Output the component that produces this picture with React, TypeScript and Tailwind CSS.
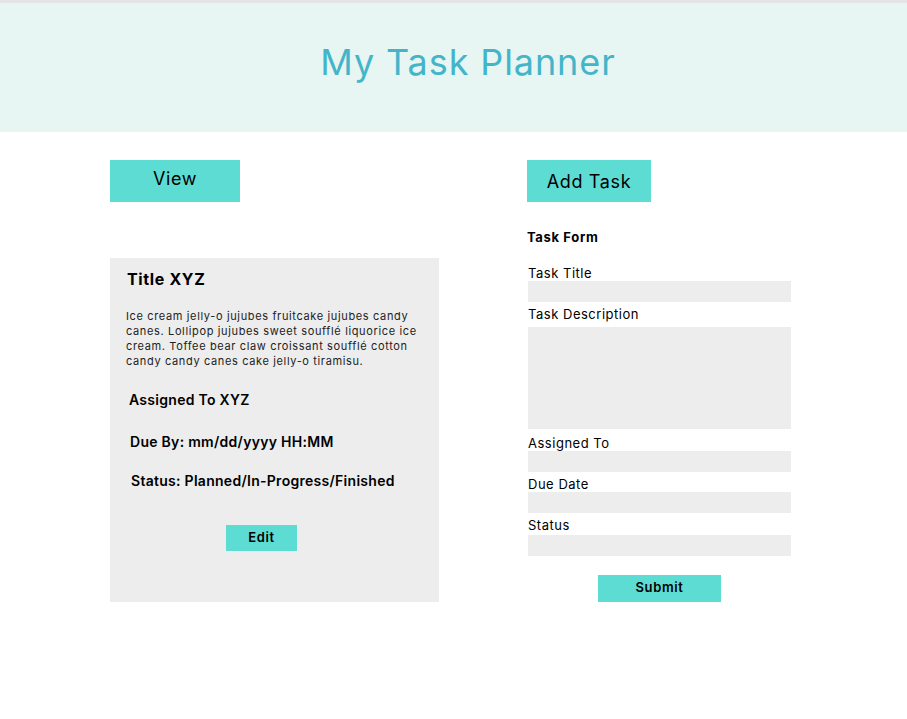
const font = { fontFamily: "Inter, 'Open Sans', sans-serif" };

function Field({ label, tall, className }: { label: string; tall?: boolean; className?: string }) {
  return (
    <div className={`flex flex-col ${className ?? ""}`}>
      <label className="text-[13px] leading-[16px] tracking-[0.04em] text-black">{label}</label>
      <div className={`w-[263px] bg-[#ededed] ${tall ? "h-[102px] mt-[5px]" : "h-[21px]"}`} />
    </div>
  );
}

export default function App() {
  return (
    <div className="min-h-[719px] bg-white text-black" style={font}>
      <div className="h-[3px] bg-[#e4e4e4]" />
      <header className="h-[129px] bg-[#e7f6f3] flex items-center justify-center">
        <h1 className="text-[36px] text-[#44b5c9] font-normal tracking-[0.025em] -mt-[12px] ml-[29px]">
          My Task Planner
        </h1>
      </header>

      <main className="flex pl-[110px] pt-[28px] tracking-[0.04em]">
        {/* View column */}
        <section className="w-[329px] flex flex-col">
          <button className="w-[130px] h-[42px] bg-[#5ddcd4] text-[18px] pb-[5px]">View</button>

          <div className="mt-[56px] h-[344px] bg-[#ededed] flex flex-col">
            <h2 className="text-[16px] font-bold ml-[17px] mt-[9px]">Title XYZ</h2>
            <p className="text-[11px] leading-[15px] text-[#222] ml-[16px] mr-[18px] mt-[18px]">
              Ice cream jelly-o jujubes fruitcake jujubes candy canes. Lollipop jujubes sweet soufflé liquorice ice
              cream. Toffee bear claw croissant soufflé cotton candy candy canes cake jelly-o tiramisu.
            </p>
            <p className="text-[14px] font-semibold tracking-[0.02em] ml-[19px] mt-[20px]">Assigned To XYZ</p>
            <p className="text-[14px] font-semibold tracking-[0.02em] ml-[20px] mt-[21px]">Due By: mm/dd/yyyy HH:MM</p>
            <p className="text-[14px] font-semibold tracking-[0.02em] ml-[21px] mt-[18px]">
              Status: Planned/In-Progress/Finished
            </p>
            <button className="self-start ml-[116px] mt-[34px] w-[71px] h-[26px] bg-[#5ddcd4] text-[13px] font-semibold">
              Edit
            </button>
          </div>
        </section>

        {/* Add task column */}
        <section className="ml-[88px] flex flex-col">
          <button className="w-[124px] h-[42px] bg-[#5ddcd4] text-[18px] pt-[1px]">Add Task</button>
          <h3 className="text-[13px] font-bold mt-[26px]">Task Form</h3>
          <div className="ml-[1px] mt-[17px] flex flex-col gap-[4px]">
            <Field label="Task Title" />
            <Field label="Task Description" tall />
            <Field label="Assigned To" className="mt-[2px]" />
            <Field label="Due Date" />
            <Field label="Status" className="[&>div]:mt-[2px]" />
          </div>
          <button className="self-start ml-[71px] mt-[19px] w-[123px] h-[27px] bg-[#5ddcd4] text-[13px] font-semibold">
            Submit
          </button>
        </section>
      </main>
    </div>
  );
}
